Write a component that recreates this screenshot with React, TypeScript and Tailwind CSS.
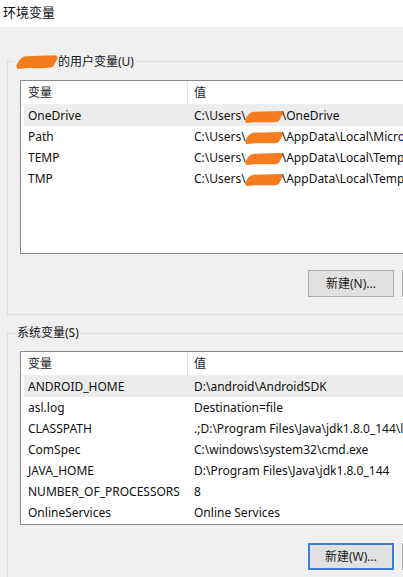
const userVars = [
  { name: "OneDrive", pre: "C:\\Users\\", post: "\\OneDrive" },
  { name: "Path", pre: "C:\\Users\\", post: "\\AppData\\Local\\Microsoft\\WindowsApps" },
  { name: "TEMP", pre: "C:\\Users\\", post: "\\AppData\\Local\\Temp" },
  { name: "TMP", pre: "C:\\Users\\", post: "\\AppData\\Local\\Temp" },
];

const sysVars = [
  { name: "ANDROID_HOME", value: "D:\\android\\AndroidSDK" },
  { name: "asl.log", value: "Destination=file" },
  { name: "CLASSPATH", value: ".;D:\\Program Files\\Java\\jdk1.8.0_144\\lib" },
  { name: "ComSpec", value: "C:\\windows\\system32\\cmd.exe" },
  { name: "JAVA_HOME", value: "D:\\Program Files\\Java\\jdk1.8.0_144" },
  { name: "NUMBER_OF_PROCESSORS", value: "8" },
  { name: "OnlineServices", value: "Online Services" },
];

// orange brush stroke used to hide the user name
const Blob = ({ w, h }: { w: number; h: number }) => (
  <svg width={w} height={h} viewBox="0 0 40 16" preserveAspectRatio="none" className="inline-block align-middle">
    <path d="M2 12 C4 7 6 4 10 3 L36 2 C38 3 39 5 37 7 L34 13 C30 15 20 14 12 14 L3 15 Z" fill="#f57c1f" />
  </svg>
);

const Header = () => (
  <div className="flex h-[24px] items-center border-b border-[#f0f0f0] text-[#1a1a1a]">
    <div className="w-[167px] border-r border-[#e5e5e5] pl-[7px] leading-[24px]">变量</div>
    <div className="pl-[6px]">值</div>
  </div>
);

const Row = ({ name, selected, children }: { name: string; selected?: boolean; children: React.ReactNode }) => (
  <div className={`ml-[3px] flex h-[21px] items-center whitespace-nowrap ${selected ? "bg-[#ececec]" : ""}`}>
    <div className="w-[164px] pl-[4px]">{name}</div>
    <div className="pl-[6px]">{children}</div>
  </div>
);

const Button = ({ label, focused }: { label: string; focused?: boolean }) => (
  <button
    className={`h-[27px] w-[86px] bg-[#e1e1e1] text-[12px] text-[#1a1a1a] ${
      focused ? "border-2 border-[#3c7fd0]" : "border border-[#adadad]"
    }`}
  >
    {label}
  </button>
);

export default function App() {
  return (
    <div
      className="h-[577px] w-[403px] overflow-hidden bg-[#f0f0f0] text-[12px] text-[#111]"
      style={{ fontFamily: '"Noto Sans", "Noto Sans CJK SC", sans-serif' }}
    >
      <div className="h-[27px] bg-white pl-[3px] pt-[3px] text-[13px] text-[#111]">环境变量</div>

      <div className="w-[460px] pl-[7px] pt-[26px]">
        <fieldset className="h-[262px] border border-[#dcdcdc] px-[12px]">
          <legend className="ml-[-6px] flex items-center pr-[2px] leading-[16px]">
            <Blob w={46} h={17} />
            <span className="-ml-[2px]">的用户变量(U)</span>
          </legend>
          <div className="mt-[10px] h-[174px] border border-[#8a8a8a] bg-white">
            <Header />
            {userVars.map((v, i) => (
              <Row key={v.name} name={v.name} selected={i === 0}>
                {v.pre}
                <span className="-mx-[3px]">
                  <Blob w={42} h={15} />
                </span>
                {v.post}
              </Row>
            ))}
          </div>
          <div className="mt-[16px] flex gap-[8px] pl-[288px]">
            <Button label="新建(N)..." />
            <Button label="编辑(E)..." />
          </div>
        </fieldset>

        <fieldset className="mt-[10px] h-[260px] border border-[#dcdcdc] px-[12px]">
          <legend className="ml-[-5px] px-[2px] leading-[16px]">系统变量(S)</legend>
          <div className="mt-[10px] h-[174px] border border-[#8a8a8a] bg-white">
            <Header />
            {sysVars.map((v, i) => (
              <Row key={v.name} name={v.name} selected={i === 0}>
                {v.value}
              </Row>
            ))}
          </div>
          <div className="mt-[18px] flex gap-[8px] pl-[288px]">
            <Button label="新建(W)..." focused />
            <Button label="编辑(I)..." />
          </div>
        </fieldset>
      </div>
    </div>
  );
}
